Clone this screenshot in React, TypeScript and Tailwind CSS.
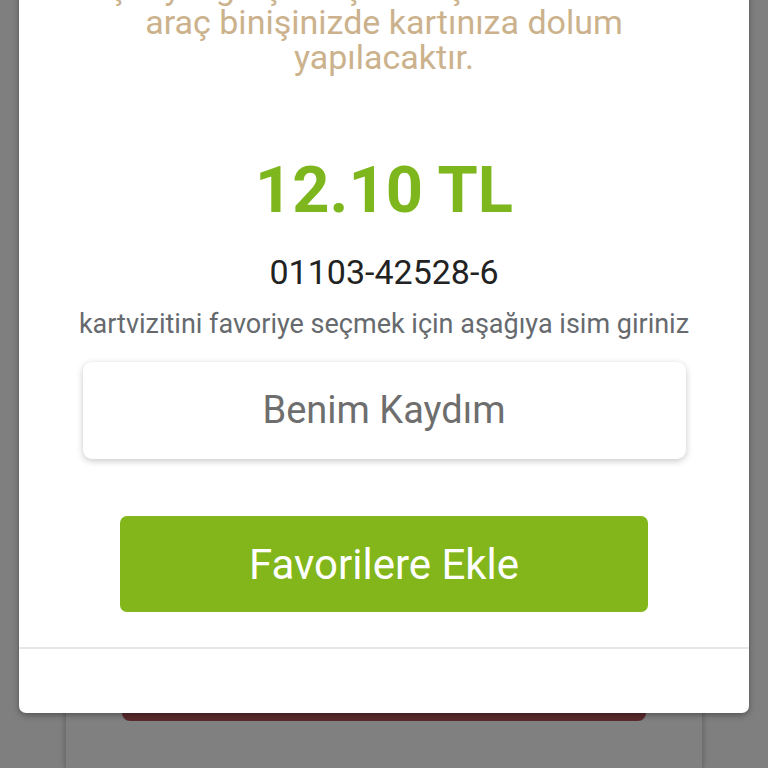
export default function App() {
  return (
    <div className="relative h-[768px] w-[768px] overflow-hidden bg-[#7f7f7f] font-['Roboto',sans-serif]">
      {/* page behind the dialog */}
      <div className="mx-auto flex h-full w-[638px] flex-col border-x border-[#6f6f6f] bg-[#808080] shadow-[0_0_6px_rgba(0,0,0,0.25)]">
        <div className="mx-auto mt-[620px] h-[101px] w-[524px] rounded-[8px] bg-[#5b2a2d]" />
      </div>

      {/* dialog */}
      <div className="absolute bottom-[55px] left-[19px] flex w-[730px] flex-col items-center rounded-[7px] bg-white shadow-[0_2px_6px_rgba(0,0,0,0.35)]">
        <p className="mt-[40px] whitespace-nowrap text-center text-[34px] leading-[35px] text-[#cbb28c]">
          İşleminiz banka onayından sonra
          <br />
          başarıyla gerçekleştirilmiştir. 1 saat sonra
          <br />
          araç binişinizde kartınıza dolum
          <br />
          yapılacaktır.
        </p>

        <div className="mt-[75px] text-[65px] font-bold leading-[80px] text-[#7db61d]">12.10 TL</div>

        <div className="mt-[22px] text-[34px] leading-[40px] text-[#222222]">01103-42528-6</div>

        <div className="mt-[16px] text-[27px] leading-[32px] text-[#666a6e]">
          kartvizitini favoriye seçmek için aşağıya isim giriniz
        </div>

        <div className="mt-[22px] flex h-[97px] w-[603px] items-center justify-center rounded-[9px] bg-white shadow-[0_2px_7px_rgba(0,0,0,0.22)]">
          <span className="text-[38px] text-[#6e6e6e]">Benim Kaydım</span>
        </div>

        <button className="mt-[57px] flex h-[96px] w-[528px] items-center justify-center rounded-[7px] bg-[#82b61b] text-[42px] text-white">
          Favorilere Ekle
        </button>

        <div className="mt-[35px] h-[2px] w-full bg-[#e6e6e6]" />
        <div className="h-[64px] w-full" />
      </div>
    </div>
  );
}
